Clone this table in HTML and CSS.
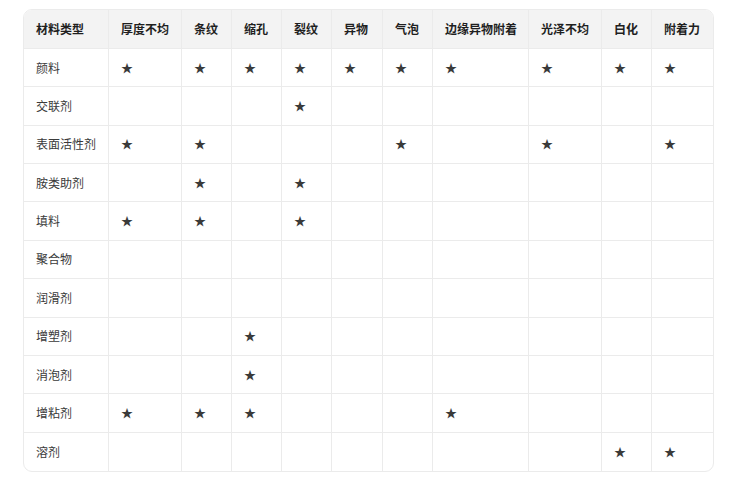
FILE: index.html
```html
<!DOCTYPE html>
<html lang="zh">
<head>
<meta charset="utf-8">
<title>材料类型</title>
<link rel="stylesheet" href="styles.css">
</head>
<body>
<div class="wrap">
  <div class="grid">
    <div class="c h">材料类型</div><div class="c h">厚度不均</div><div class="c h">条纹</div><div class="c h">缩孔</div><div class="c h">裂纹</div><div class="c h">异物</div><div class="c h">气泡</div><div class="c h">边缘异物附着</div><div class="c h">光泽不均</div><div class="c h">白化</div><div class="c h last">附着力</div>

    <div class="c">颜料</div><div class="c">★</div><div class="c">★</div><div class="c">★</div><div class="c">★</div><div class="c">★</div><div class="c">★</div><div class="c">★</div><div class="c">★</div><div class="c">★</div><div class="c last">★</div>

    <div class="c">交联剂</div><div class="c"></div><div class="c"></div><div class="c"></div><div class="c">★</div><div class="c"></div><div class="c"></div><div class="c"></div><div class="c"></div><div class="c"></div><div class="c last"></div>

    <div class="c">表面活性剂</div><div class="c">★</div><div class="c">★</div><div class="c"></div><div class="c"></div><div class="c"></div><div class="c">★</div><div class="c"></div><div class="c">★</div><div class="c"></div><div class="c last">★</div>

    <div class="c">胺类助剂</div><div class="c"></div><div class="c">★</div><div class="c"></div><div class="c">★</div><div class="c"></div><div class="c"></div><div class="c"></div><div class="c"></div><div class="c"></div><div class="c last"></div>

    <div class="c">填料</div><div class="c">★</div><div class="c">★</div><div class="c"></div><div class="c">★</div><div class="c"></div><div class="c"></div><div class="c"></div><div class="c"></div><div class="c"></div><div class="c last"></div>

    <div class="c">聚合物</div><div class="c"></div><div class="c"></div><div class="c"></div><div class="c"></div><div class="c"></div><div class="c"></div><div class="c"></div><div class="c"></div><div class="c"></div><div class="c last"></div>

    <div class="c">润滑剂</div><div class="c"></div><div class="c"></div><div class="c"></div><div class="c"></div><div class="c"></div><div class="c"></div><div class="c"></div><div class="c"></div><div class="c"></div><div class="c last"></div>

    <div class="c">增塑剂</div><div class="c"></div><div class="c"></div><div class="c">★</div><div class="c"></div><div class="c"></div><div class="c"></div><div class="c"></div><div class="c"></div><div class="c"></div><div class="c last"></div>

    <div class="c">消泡剂</div><div class="c"></div><div class="c"></div><div class="c">★</div><div class="c"></div><div class="c"></div><div class="c"></div><div class="c"></div><div class="c"></div><div class="c"></div><div class="c last"></div>

    <div class="c">增粘剂</div><div class="c">★</div><div class="c">★</div><div class="c">★</div><div class="c"></div><div class="c"></div><div class="c"></div><div class="c">★</div><div class="c"></div><div class="c"></div><div class="c last"></div>

    <div class="c b">溶剂</div><div class="c b"></div><div class="c b"></div><div class="c b"></div><div class="c b"></div><div class="c b"></div><div class="c b"></div><div class="c b"></div><div class="c b"></div><div class="c b">★</div><div class="c b last">★</div>
  </div>
</div>
</body>
</html>
```

FILE: styles.css
```css
html, body {
  margin: 0;
  padding: 0;
  background: #ffffff;
}
body {
  font-family: "Noto Sans CJK SC", "Noto Sans", sans-serif;
  font-size: 12px;
  color: #3a3a3a;
}
.wrap {
  margin: 9px 0 0 23px;
  width: 689px;
  border: 1px solid #ebebeb;
  border-radius: 9px;
  overflow: hidden;
}
.grid {
  display: grid;
  grid-template-columns: 85px 73px 50px 50px 50px 51px 50px 96px 73px 50px 61px;
  grid-template-rows: 39px repeat(11, 38.36px);
}
.c {
  display: flex;
  align-items: center;
  padding-left: 12px;
  border-right: 1px solid #ebebeb;
  border-bottom: 1px solid #ebebeb;
  white-space: nowrap;
  line-height: 1;
}
.c.last {
  border-right: none;
}
.c.b {
  border-bottom: none;
}
.h {
  background: #f3f3f3;
  font-weight: 700;
  color: #1f1f1f;
}
```
